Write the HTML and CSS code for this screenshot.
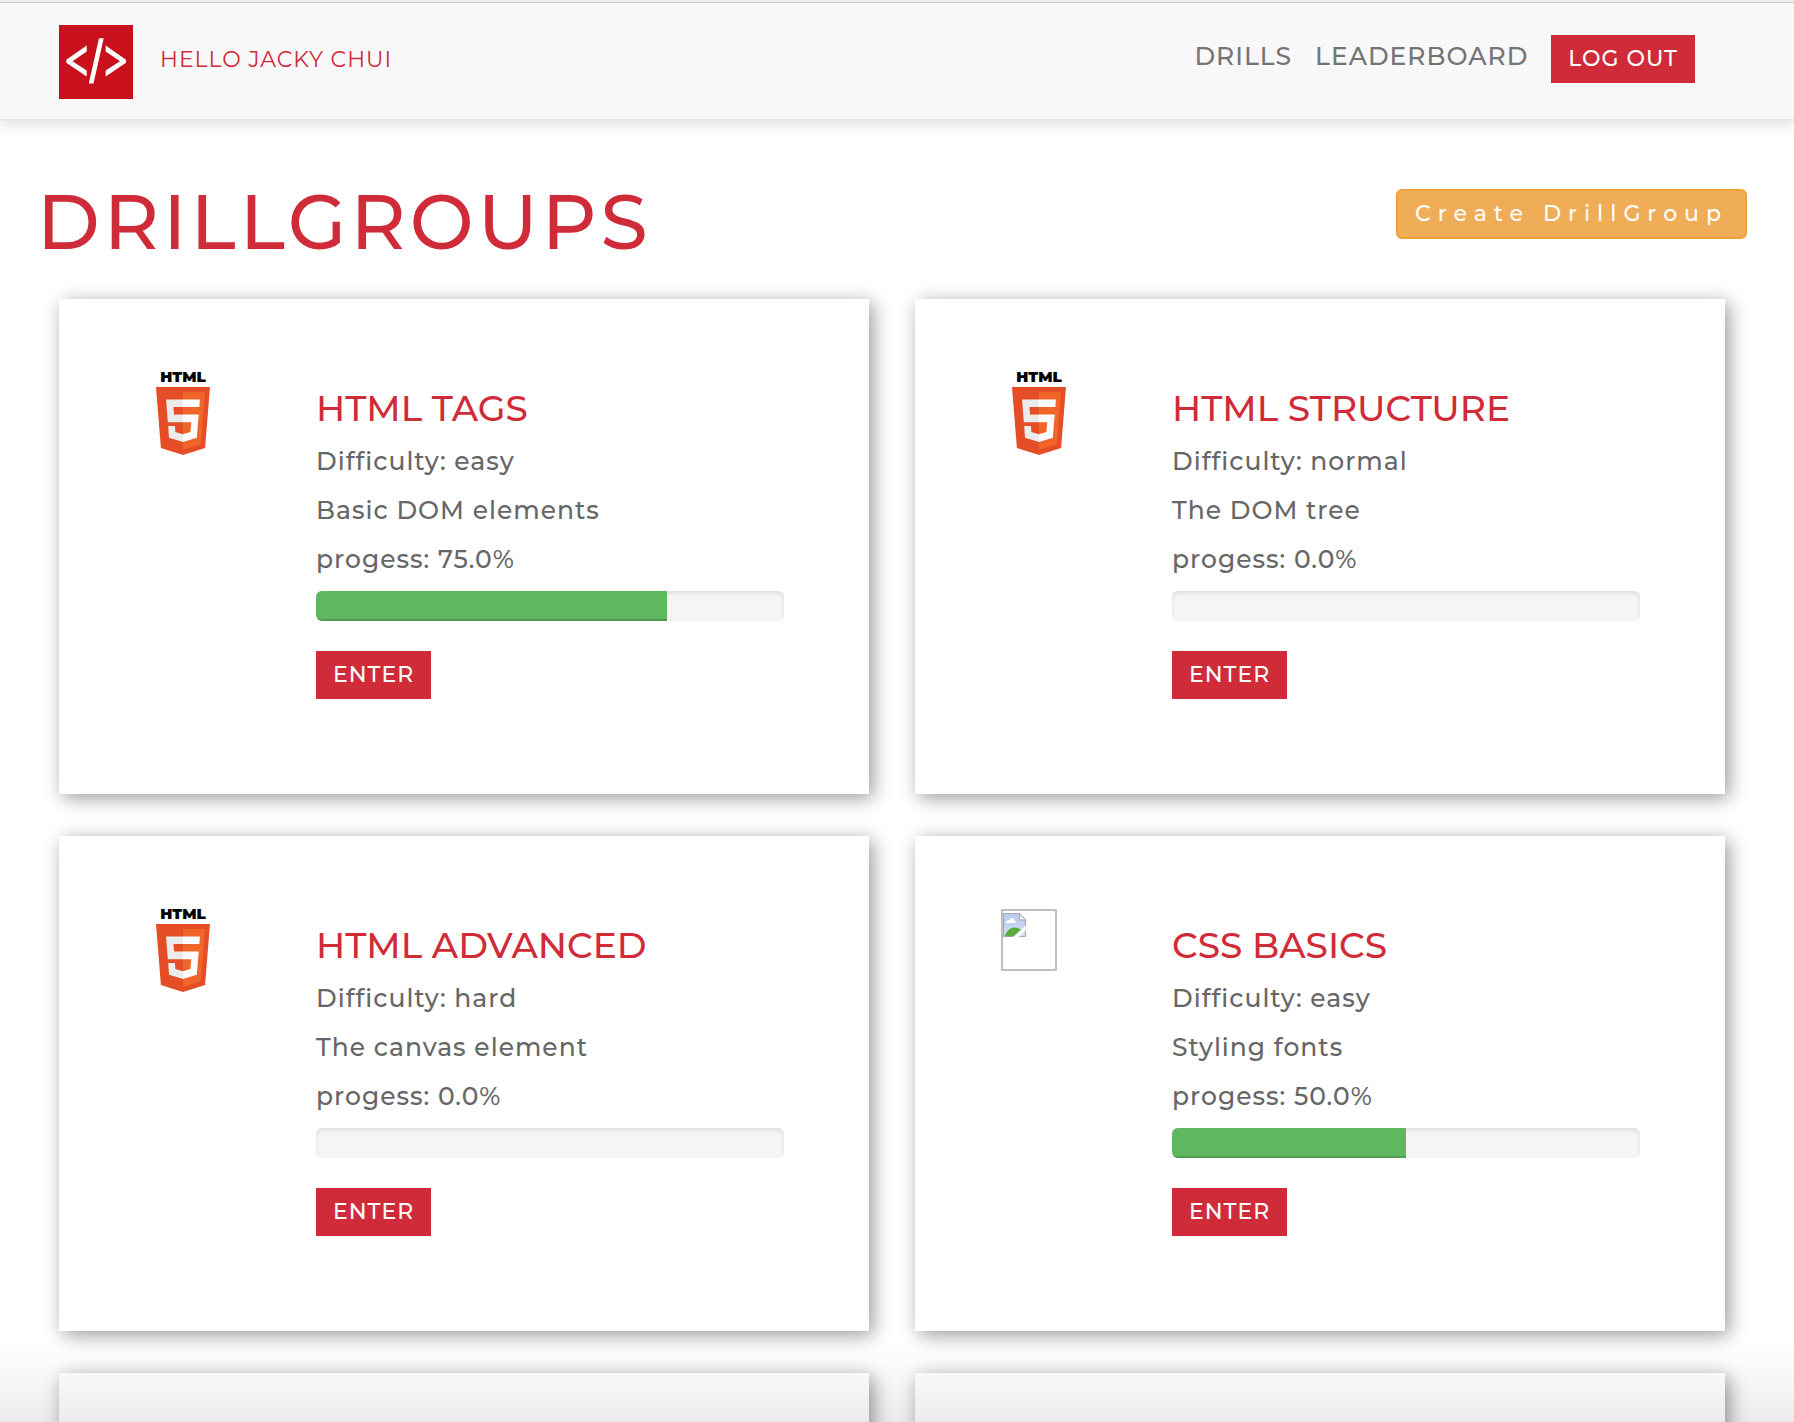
FILE: index.html
```html
<!DOCTYPE html>
<html lang="en">
<head>
<meta charset="utf-8">
<title>Drillgroups</title>
<link rel="stylesheet" href="styles.css">
</head>
<body>
<div class="page">
  <header class="navbar">
    <a href="#" class="brand" aria-label="Home">
      <svg width="74" height="74" viewBox="0 0 74 74" fill="#fff">
        <rect width="74" height="74" fill="#c9111d"/>
        <path d="M27.700 20.500 7.300 34.800V37.800L27.700 51.500V45.500L13.500 36.300 27.700 26.500zM46.700 20.500 67 34.800V37.800L46.700 51.500V45.500L61 36.300 46.700 26.500zM40 13.200H44.700L34.500 58.500H29.800z"/>
      </svg>
    </a>
    <p class="greeting">HELLO JACKY CHUI</p>
    <nav class="menu">
      <a href="#" class="menu-link">DRILLS</a>
      <a href="#" class="menu-link">LEADERBOARD</a>
      <button type="button" class="btn">LOG OUT</button>
    </nav>
  </header>
  <main>
    <div class="title-row">
      <h1>DRILLGROUPS</h1>
      <button type="button" class="btn-create">Create DrillGroup</button>
    </div>
    <div class="cards">
      <article class="card">
        <div class="thumb">
          <svg width="76" height="84" viewBox="0 0 76 84" role="img" aria-label="HTML5">
            <text x="38" y="11" text-anchor="middle" class="html5-word">HTML</text>
            <g transform="translate(7.4 16) scale(.1197 .1328)">
              <path fill="#e44d26" d="M71 460 30 0H481L440 460 255 512z"/>
              <path fill="#f16529" d="M256 472 405 431 440 37H256z"/>
              <path fill="#ebebeb" d="M256 208H181L176 150H256V94H114L129 265H256zM256 355 192 338 188 293H132L139 382 256 414z"/>
              <path fill="#fff" d="M255 208V265H325L318 338 255 355V414L371 382 387 208zM255 94V150H392L397 94z"/>
            </g>
          </svg>
        </div>
        <div class="info">
          <h2>HTML TAGS</h2>
          <p>Difficulty: easy</p>
          <p>Basic DOM elements</p>
          <p>progess: 75.0%</p>
          <div class="progress"><div class="bar" style="width:75%"></div></div>
          <button type="button" class="btn">ENTER</button>
        </div>
      </article>
      <article class="card">
        <div class="thumb">
          <svg width="76" height="84" viewBox="0 0 76 84" role="img" aria-label="HTML5">
            <text x="38" y="11" text-anchor="middle" class="html5-word">HTML</text>
            <g transform="translate(7.4 16) scale(.1197 .1328)">
              <path fill="#e44d26" d="M71 460 30 0H481L440 460 255 512z"/>
              <path fill="#f16529" d="M256 472 405 431 440 37H256z"/>
              <path fill="#ebebeb" d="M256 208H181L176 150H256V94H114L129 265H256zM256 355 192 338 188 293H132L139 382 256 414z"/>
              <path fill="#fff" d="M255 208V265H325L318 338 255 355V414L371 382 387 208zM255 94V150H392L397 94z"/>
            </g>
          </svg>
        </div>
        <div class="info">
          <h2>HTML STRUCTURE</h2>
          <p>Difficulty: normal</p>
          <p>The DOM tree</p>
          <p>progess: 0.0%</p>
          <div class="progress"><div class="bar" style="width:0%"></div></div>
          <button type="button" class="btn">ENTER</button>
        </div>
      </article>
      <article class="card">
        <div class="thumb">
          <svg width="76" height="84" viewBox="0 0 76 84" role="img" aria-label="HTML5">
            <text x="38" y="11" text-anchor="middle" class="html5-word">HTML</text>
            <g transform="translate(7.4 16) scale(.1197 .1328)">
              <path fill="#e44d26" d="M71 460 30 0H481L440 460 255 512z"/>
              <path fill="#f16529" d="M256 472 405 431 440 37H256z"/>
              <path fill="#ebebeb" d="M256 208H181L176 150H256V94H114L129 265H256zM256 355 192 338 188 293H132L139 382 256 414z"/>
              <path fill="#fff" d="M255 208V265H325L318 338 255 355V414L371 382 387 208zM255 94V150H392L397 94z"/>
            </g>
          </svg>
        </div>
        <div class="info">
          <h2>HTML ADVANCED</h2>
          <p>Difficulty: hard</p>
          <p>The canvas element</p>
          <p>progess: 0.0%</p>
          <div class="progress"><div class="bar" style="width:0%"></div></div>
          <button type="button" class="btn">ENTER</button>
        </div>
      </article>
      <article class="card">
        <div class="thumb">
          <div class="missing">
            <svg width="24" height="26" viewBox="0 0 24 26">
              <defs><linearGradient id="sky" x2="0" y2="1"><stop stop-color="#b9ccef"/><stop offset="1" stop-color="#cfdcf5"/></linearGradient></defs>
              <path fill="url(#sky)" stroke="#a3a7ad" d="M.500 2.500H16.500L22.500 9V25.500H.500z"/>
              <path fill="#fff" d="M3 12c0-2 2-3 3-2.500C7 6 11 6 11.500 9.500 13 10 13 12 12 12z"/>
              <path fill="#5aad3f" d="M1.500 25C4 19 8 16.500 11.500 16.500 15 16.500 17 18 18.500 20L14 25z"/>
              <path fill="#fff" d="M24 13.500V18L16 26H10z"/>
              <path fill="#f2f2f2" stroke="#a3a7ad" d="M16.500 2.500V9H22.500z"/>
            </svg>
          </div>
        </div>
        <div class="info">
          <h2>CSS BASICS</h2>
          <p>Difficulty: easy</p>
          <p>Styling fonts</p>
          <p>progess: 50.0%</p>
          <div class="progress"><div class="bar" style="width:50%"></div></div>
          <button type="button" class="btn">ENTER</button>
        </div>
      </article>
      <article class="card"></article>
      <article class="card"></article>
    </div>
  </main>
  <div class="fade"></div>
</div>
</body>
</html>
```
FILE: styles.css
```css
* { box-sizing: border-box; }
body, h1, h2, p { margin: 0; }
body {
  font-family: Montserrat, Inter, "Open Sans", sans-serif;
  font-weight: 500;
  color: #666;
  background: #fff;
}
button { font: inherit; cursor: pointer; }
.html5-word { font-size: 15px; font-weight: 900; fill: #000; }

.page {
  height: 100vh;
  overflow-y: auto;
  scrollbar-width: none;
  border-top: 2px solid #f0f0f0;
}

/* top bar */
.navbar {
  display: flex;
  align-items: center;
  padding: 22px 99px 20px 59px;
  background: #f8f8f8;
  border-top: 1px solid #ccc;
  border-bottom: 2px solid #e7e7e7;
  box-shadow: 0 2px 16px rgba(0, 0, 0, .16);
}
.brand svg { display: block; }
.greeting {
  margin: 0 0 6px 27px;
  font-size: 22px;
  font-weight: 400;
  letter-spacing: 1px;
  color: #d02b38;
}
.menu {
  display: flex;
  align-items: center;
  gap: 23px;
  margin: 0 0 6px auto;
}
.menu-link {
  padding-bottom: 6px;
  font-size: 25px;
  letter-spacing: 1px;
  color: #747474;
  text-decoration: none;
}
.btn {
  height: 48px;
  padding: 0 17px 2px;
  border: 0;
  background: #d02b38;
  color: #fff;
  font-size: 22px;
  letter-spacing: 1px;
}

/* page title */
.title-row {
  display: flex;
  justify-content: space-between;
  align-items: flex-start;
  padding: 68px 47px 60px 37px;
}
h1 {
  font-size: 76px;
  font-weight: 500;
  line-height: 50px;
  padding-top: 8px;
  margin-bottom: -8px;
  letter-spacing: 4px;
  color: #d02b38;
}
.btn-create {
  height: 50px;
  padding: 0 17px 2px;
  border: 2px solid #eea236;
  border-radius: 6px;
  background: #f0ad57;
  color: #fff;
  font-size: 22px;
  letter-spacing: 7px;
}

/* drill groups */
.cards {
  display: grid;
  grid-template-columns: 1fr 1fr;
  gap: 42px 46px;
  padding: 0 69px 42px 59px;
}
.card {
  display: grid;
  grid-template-columns: 171px 1fr;
  min-height: 495px;
  padding: 72px 85px 95px 86px;
  background: #fff;
  box-shadow: 4px 4px 18px rgba(0, 0, 0, .4);
}
.thumb svg { display: block; overflow: visible; }
.missing {
  width: 56px;
  height: 62px;
  margin-top: 1px;
  border: 2px solid #c0c0c0;
}
.info { padding-top: 17px; }
h2 {
  margin-bottom: 9px;
  font-size: 36px;
  font-weight: 500;
  line-height: 40px;
  color: #d02b38;
}
.info p {
  font-size: 25px;
  line-height: 49px;
  letter-spacing: 1px;
}
.progress {
  height: 30px;
  margin: 7px 0 30px;
  overflow: hidden;
  border-radius: 6px;
  background: #f5f5f5;
  box-shadow: inset 0 2px 4px rgba(0, 0, 0, .1);
}
.bar {
  height: 100%;
  background: #5fb760;
  box-shadow: inset 0 -2px 0 rgba(0, 0, 0, .15);
}

/* shade along the bottom edge of the window */
.fade {
  position: fixed;
  inset: auto 0 0;
  height: 84px;
  background: linear-gradient(transparent, rgba(0, 0, 0, .03) 50%, rgba(0, 0, 0, .08));
  pointer-events: none;
}
```
